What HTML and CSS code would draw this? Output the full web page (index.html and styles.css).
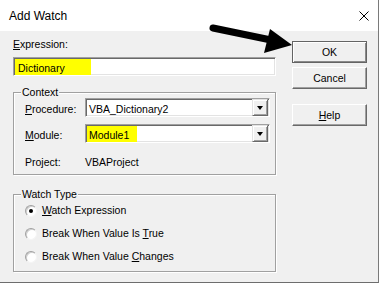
FILE: index.html
```html
<!DOCTYPE html>
<html lang="en">
<head>
    <meta charset="UTF-8">
    <meta name="viewport" content="width=device-width, initial-scale=1.0">
    <title>Add Watch</title>
    <link rel="stylesheet" href="styles.css">
</head>
<body>
    <div class="window">
        <div class="titlebar">
            <span class="title">Add Watch</span>
            <svg class="close" width="10" height="10" viewBox="0 0 10 10">
                <path d="M0.5 0.5L9.5 9.5M9.5 0.5L0.5 9.5" stroke="#000" stroke-width="1"/>
            </svg>
        </div>

        <div class="dialog">
            <div class="main">
                <label class="field-label"><u>E</u>xpression:</label>
                <div class="textbox">
                    <span class="value mark mark-expr">Dictionary</span>
                </div>

                <fieldset class="group context">
                    <legend>Context</legend>
                    <div class="row first">
                        <span class="row-label"><u>P</u>rocedure:</span>
                        <div class="combo">
                            <span class="value">VBA_Dictionary2</span>
                            <span class="drop"></span>
                        </div>
                    </div>
                    <div class="row">
                        <span class="row-label"><u>M</u>odule:</span>
                        <div class="combo">
                            <span class="value mark mark-module">Module1</span>
                            <span class="drop"></span>
                        </div>
                    </div>
                    <div class="row project">
                        <span class="row-label">Project:</span>
                        <span>VBAProject</span>
                    </div>
                </fieldset>

                <fieldset class="group watch-type">
                    <legend>Watch Type</legend>
                    <div class="radio-row">
                        <span class="radio checked"></span>
                        <span><u>W</u>atch Expression</span>
                    </div>
                    <div class="radio-row">
                        <span class="radio"></span>
                        <span>Break When Value Is <u>T</u>rue</span>
                    </div>
                    <div class="radio-row">
                        <span class="radio"></span>
                        <span>Break When Value <u>C</u>hanges</span>
                    </div>
                </fieldset>
            </div>

            <div class="buttons">
                <button class="btn default">OK</button>
                <button class="btn cancel">Cancel</button>
                <button class="btn help"><u>H</u>elp</button>
            </div>
        </div>

        <!-- annotation arrow pointing at OK -->
        <svg class="arrow" width="380" height="284" viewBox="0 0 380 284">
            <line x1="213" y1="28" x2="271" y2="40" stroke="#000" stroke-width="7" stroke-linecap="round"/>
            <polygon points="270,29 292,45 264,53" fill="#000"/>
        </svg>
    </div>
</body>
</html>
```

FILE: styles.css
```css
body{
    margin: 0;
    background-color: #fff;
    font-family: "Liberation Sans", Arial, sans-serif;
    font-size: 10.5px;
    color: #000;
}

.window{
    position: relative;
    width: 379px;
    height: 283px;
    box-sizing: border-box;
    background-color: #f0f0f0;
    border-right: 1px solid #7a7a7a;
    border-bottom: 1px solid #6d6d6d;
    overflow: hidden;
}

.titlebar{
    height: 31px;
    background-color: #fff;
    display: flex;
    align-items: center;
    justify-content: space-between;
    padding: 0 9px;

    .title{
        font-size: 12px;
    }
}

.dialog{
    display: grid;
    grid-template-columns: 263px 75px;
    column-gap: 16px;
    padding-left: 13px;
    align-items: start;
}

.field-label{
    display: block;
    line-height: 13px;
    margin-top: 7px;
}

/* sunken edit / combo boxes */
.textbox,
.combo{
    display: flex;
    align-items: flex-start;
    height: 19px;
    box-sizing: border-box;
    background-color: #fff;
    border: 1px solid;
    border-color: #a0a0a0 #fff #fff #a0a0a0;
    box-shadow: inset 1px 1px #696969, inset -1px -1px #e3e3e3;
}

.textbox{
    margin-top: 6px;
}

.value{
    display: block;
    height: 16px;
    box-sizing: border-box;
    margin: 1px 0 0 1px;
    padding: 3px 0 0 2px;
    line-height: 13px;
    white-space: nowrap;
}

.mark{
    background-color: #ffff00;
}
.mark-expr{
    width: 76px;
    padding-left: 3px;
}
.mark-module{
    width: 50px;
}

.combo{
    width: 185px;
}

.drop{
    position: relative;
    margin-left: auto;
    margin-right: 1px;
    width: 16px;
    height: 17px;
    box-sizing: border-box;
    background-color: #f0f0f0;
    border: 1px solid;
    border-color: #e3e3e3 #696969 #696969 #e3e3e3;
    box-shadow: inset 1px 1px #fff, inset -1px -1px #a0a0a0;

    &::after{
        content: "";
        position: absolute;
        left: 4px;
        top: 6px;
        border-top: 4px solid #000;
        border-left: 3.5px solid transparent;
        border-right: 3.5px solid transparent;
    }
}

/* etched group boxes */
.group{
    margin: 0;
    min-width: 0;
    border: 1px solid #a0a0a0;
    box-shadow: inset 1px 1px #fff, 1px 1px #fff;

    legend{
        padding: 0 1px;
        margin-left: -4px;
        line-height: 13px;
        background-color: #f0f0f0;
    }
}

.context{
    margin-top: 10px;
    padding: 0 5px 5px 11px;
}

.row{
    display: flex;
    align-items: baseline;
    margin-top: 7px;

    &.first{
        margin-top: -1px;
    }
    &.project{
        margin-top: 13px;
        line-height: 13px;
    }
    .row-label{
        width: 60px;
        flex-shrink: 0;
        line-height: 13px;
    }
}

.watch-type{
    margin-top: 13px;
    padding: 0 5px 8px 11px;
}

.radio-row{
    display: flex;
    align-items: center;
    gap: 5px;
    line-height: 13px;
    margin-top: 10px;

    &:first-of-type{
        margin-top: 3px;
    }
}

.radio{
    position: relative;
    width: 12px;
    height: 12px;
    box-sizing: border-box;
    border-radius: 50%;
    background-color: #fff;
    border: 1px solid;
    border-color: #a0a0a0 #f4f4f4 #f4f4f4 #a0a0a0;
    box-shadow: inset 1px 1px #cfcfcf;

    &.checked::after{
        content: "";
        position: absolute;
        left: 3px;
        top: 3px;
        width: 4px;
        height: 4px;
        border-radius: 50%;
        background-color: #000;
    }
}

.buttons{
    display: flex;
    flex-direction: column;
    padding-top: 10px;
}

.btn{
    height: 22px;
    padding: 0;
    font: inherit;
    color: #000;
    background-color: #f0f0f0;
    border: 1px solid;
    border-color: #fff #696969 #696969 #fff;
    box-shadow: inset -1px -1px #a0a0a0;

    &.default{
        border-color: #646464;
        box-shadow: inset 1px 1px #fff, inset -1px -1px #8a8a8a;
    }
    &.cancel{
        margin-top: 4px;
    }
    &.help{
        margin-top: 15px;
    }
}

.arrow{
    position: absolute;
    left: 0;
    top: 0;
    pointer-events: none;
}
```
